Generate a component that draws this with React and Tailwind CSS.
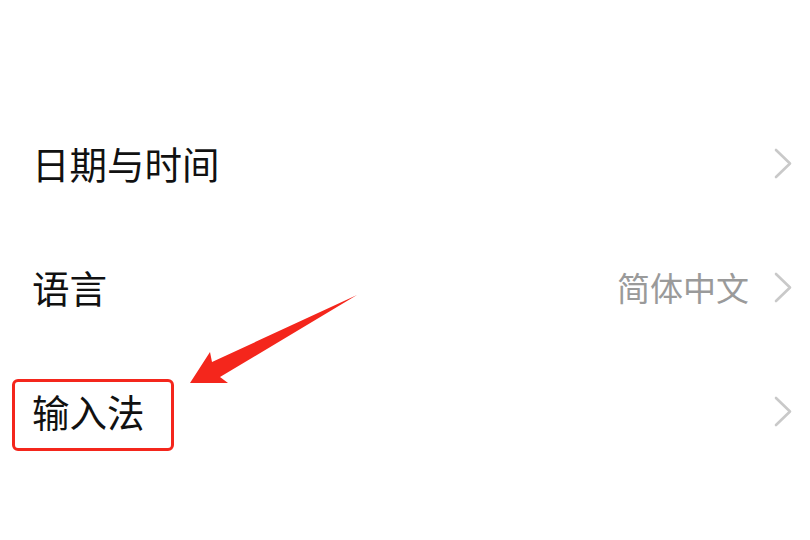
import React from 'react';

const rows = [
  { label: '日期与时间', value: null },
  { label: '语言', value: '简体中文' },
  { label: '输入法', value: null, marked: true },
];

const Chevron = () => (
  <svg width="18" height="31" viewBox="0 0 18 31" className="shrink-0">
    <polyline points="2,2 16,15.5 2,29" fill="none" stroke="#c9c9c9" strokeWidth="2.6" strokeLinecap="round" strokeLinejoin="round" />
  </svg>
);

const App = () => {
  return (
    <div
      className="relative w-[810px] h-[540px] overflow-hidden bg-white"
      style={{ fontFamily: '"Noto Sans CJK SC", "Noto Sans", sans-serif' }}
    >
      <div className="pt-[101px]">
        {rows.map((row) => (
          <div key={row.label} className="relative h-[124px] flex items-center justify-between pl-[32px] pr-[18px]">
            <span className="text-[37.5px] leading-none text-[#111111]">{row.label}</span>
            <div className="flex items-center gap-[25px]">
              {row.value && (
                <span className="text-[33px] leading-none text-[#9a9a9a]">{row.value}</span>
              )}
              <Chevron />
            </div>
            {row.marked && (
              <div className="absolute left-[12px] top-[30px] w-[162px] h-[72px] border-[3.5px] border-[#f4261c] rounded-[6px]" />
            )}
          </div>
        ))}
      </div>

      {/* arrow */}
      <svg className="absolute inset-0" width="810" height="540" viewBox="0 0 810 540">
        <polygon
          points="357,295 212,362 210,352 190,383 228,383 220,377"
          fill="#f4261c"
        />
      </svg>
    </div>
  );
};

export default App;
